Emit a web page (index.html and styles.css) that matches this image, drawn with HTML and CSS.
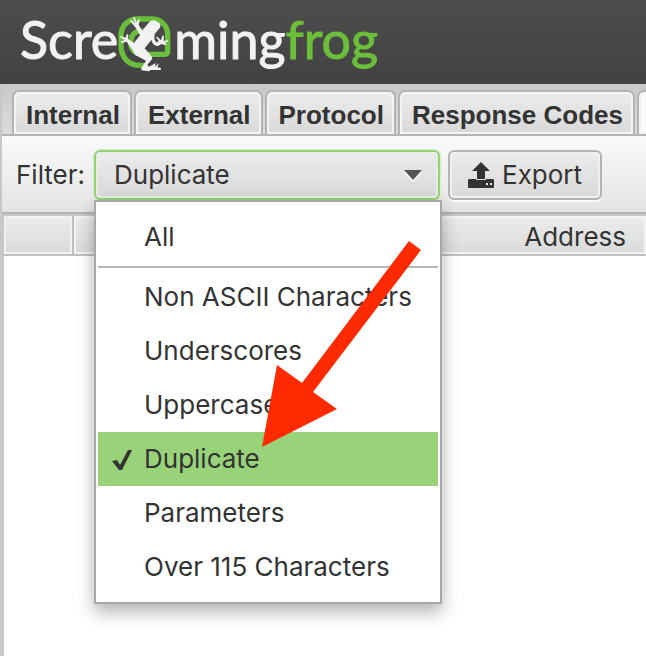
FILE: index.html
```html
<!DOCTYPE html>
<html lang="en">
<head>
<meta charset="utf-8">
<title>Screamingfrog</title>
<link rel="stylesheet" href="styles.css">
</head>
<body>
<header class="brand">
  <span class="word">Scre</span>
  <svg class="frog" viewBox="24 12 168 180" role="img" aria-label="a">
    <path class="at" d="M104 172H92C54 172 33 148 33 112V84C33 52 54 33 86 33H122C154 33 173 52 173 82V128Q173 139 162 139H106"/>
    <path class="at" d="M98 68C72 68 62 84 62 104C62 126 78 139 98 139"/>
    <path class="skin" d="M96 68L118 42Q126 34 138 39L150 47Q154 56 146 64L134 78L133 94L140 104L146 98L138 88L142 86L153 97L158 82L162 84L161 98L174 97L174 101L163 104L170 109L166 112L154 108L144 114Q134 116 128 106L124 96L104 121L122 142Q130 150 124 156L112 170L117 176L138 165L134 176L147 166L142 178L153 180L152 186L120 186L118 190L94 187Q92 180 98 174L108 158L76 141L62 118L50 101L34 105L32 101L44 96L30 88L32 84L46 89L51 78L55 80L54 93L72 105L90 82L78 61L60 38L64 35L75 46L70 28L74 27L80 43L86 33L90 35L86 50Z"/>
  </svg>
  <span class="word">ming<span class="word-accent">frog</span></span>
</header>
<main class="app">
  <nav class="tabs">
    <button class="tab" type="button">Internal</button>
    <button class="tab" type="button">External</button>
    <button class="tab" type="button">Protocol</button>
    <button class="tab" type="button">Response Codes</button>
    <button class="tab tab-active" type="button" aria-label="URL"></button>
  </nav>
  <div class="toolbar">
    <label class="filter-label" for="filter">Filter:</label>
    <div class="combo">
      <select class="combo-select" id="filter">
        <option>All</option>
        <option>Non ASCII Characters</option>
        <option>Underscores</option>
        <option>Uppercase</option>
        <option selected>Duplicate</option>
        <option>Parameters</option>
        <option>Over 115 Characters</option>
      </select>
      <svg class="combo-arrow" viewBox="0 0 18 12" aria-hidden="true"><path d="M0 2h18l-9 10z" fill="#fff"/><path d="M0 0h18l-9 10z" fill="#555"/></svg>
      <div class="menu">
        <button class="item" type="button">All</button>
        <hr class="rule">
        <button class="item" type="button">Non ASCII Characters</button>
        <button class="item" type="button">Underscores</button>
        <button class="item" type="button">Uppercase</button>
        <button class="item item-on" type="button"><svg class="check" viewBox="0 0 20 20" aria-hidden="true"><path d="M0 11l5-1 3 5L16 0h4L10 20H7z"/></svg>Duplicate</button>
        <button class="item" type="button">Parameters</button>
        <button class="item" type="button">Over 115 Characters</button>
        <svg class="pointer" viewBox="0 0 160 206" aria-hidden="true"><path d="M147 0l12 9L51 151l24 17L0 206 15 124l25 18z"/></svg>
      </div>
    </div>
    <button class="export" type="button"><svg class="export-icon" viewBox="0 0 26 26" aria-hidden="true"><path d="M13 0l9 9h-5v8H9V9H4z"/><path d="M1 17h7v1h10v-1h7l1 1v7q0 1-1 1H1q-1 0-1-1v-7z"/><path d="M18 21h2v2h-2zM22 21h2v2h-2z" fill="#eee"/></svg>Export</button>
  </div>
  <div class="results">
    <table class="grid">
      <thead><tr><th class="col-index"></th><th class="col-address">Address</th></tr></thead>
    </table>
  </div>
</main>
</body>
</html>
```
FILE: styles.css
```css
* { box-sizing: border-box; }
body {
  margin: 0;
  min-height: 100vh;
  display: flex;
  flex-direction: column;
  background: #fff;
  color: #333;
  font: 26px/32px Inter, sans-serif;
}
button, select { font: inherit; color: inherit; margin: 0; }
.brand {
  display: flex;
  align-items: flex-start;
  height: 84px;
  padding: 0 20px;
  background: linear-gradient(#4d4d4d, #424242);
}
.word { font: 52px/78px Lato, sans-serif; color: #f2f2f2; -webkit-text-stroke: 1px; }
.word-accent { color: #6bbf3a; }
.frog { width: 56px; height: 60px; margin-top: 12px; flex: none; }
.at { fill: none; stroke: #69be3b; stroke-width: 16; }
.skin { fill: #f2f2f2; }
.app {
  flex: 1;
  display: flex;
  flex-direction: column;
  border-left: 2px solid #c8c8c8;
}
.tabs {
  display: flex;
  gap: 2px;
  height: 52px;
  padding: 6px 0 0 10px;
  overflow: hidden;
  border-bottom: 2px solid #b4b4b4;
  background: linear-gradient(#c8c8c8, #dcdcdc);
}
.tab {
  flex: none;
  padding: 4px 10px 0 12px;
  border: 2px solid #b4b4b4;
  border-bottom: 0;
  border-radius: 7px 7px 0 0;
  background: linear-gradient(#ececec, #d8d8d8);
  box-shadow: inset 0 0 0 2px #f4f4f4;
  font: bold 26px/32px "Liberation Sans", sans-serif;
}
.tab-active { width: 120px; background: #fafafa; }
.toolbar {
  display: flex;
  align-items: flex-start;
  height: 78px;
  padding: 14px;
  border-bottom: 2px solid #b4b4b4;
  background: linear-gradient(#fafafa, #e4e4e4);
}
.filter-label { width: 78px; line-height: 50px; flex: none; }
.combo { position: relative; width: 346px; margin-right: 8px; flex: none; }
.combo-select {
  display: block;
  appearance: none;
  width: 100%;
  height: 50px;
  padding: 0 18px;
  border: 2px solid #93d275;
  border-radius: 6px;
  outline: 0;
  background: linear-gradient(#ececec, #d8d8d8);
  box-shadow: 0 0 0 1px #d5edca, inset 0 0 0 2px #e6eee2;
}
.combo-arrow { position: absolute; right: 18px; top: 20px; width: 18px; height: 12px; }
.menu {
  position: absolute;
  z-index: 1;
  top: 50px;
  left: 0;
  width: 348px;
  padding: 8px 2px;
  border: 2px solid #a8a8a8;
  background: #fff;
  box-shadow: 0 8px 16px rgba(0, 0, 0, .3);
}
.item {
  position: relative;
  display: block;
  width: 100%;
  height: 54px;
  padding: 0 0 0 46px;
  border: 0;
  background: none;
  text-align: left;
}
.item-on { background: #98d37a; }
.rule { height: 2px; margin: 2px 0; border: 0; background: #b8b8b8; }
.check { position: absolute; left: 14px; top: 18px; width: 20px; height: 20px; fill: #333; }
.pointer { position: absolute; left: 166px; top: 39px; width: 160px; height: 206px; fill: #ff2a00; }
.export {
  display: flex;
  align-items: center;
  gap: 8px;
  height: 50px;
  padding: 0 18px;
  border: 2px solid #b4b4b4;
  border-radius: 6px;
  background: linear-gradient(#ececec, #d8d8d8);
  box-shadow: 0 2px 0 #fafafa, inset 0 0 0 2px #f0f0f0;
}
.export-icon { width: 26px; height: 26px; fill: #333; }
.results {
  flex: 1;
  border-top: 2px solid #c8c8c8;
  border-left: 2px solid #c8c8c8;
}
.grid {
  width: 100%;
  border-collapse: separate;
  border-spacing: 0;
}
.grid th {
  height: 40px;
  padding: 4px 0 0;
  border-bottom: 2px solid #c0c0c0;
  background: linear-gradient(#ececec, #dadada);
  box-shadow: inset 0 0 0 2px #f2f2f2;
  font-weight: 400;
}
.grid .col-index { width: 70px; border-right: 2px solid #c0c0c0; }
.grid .col-address { padding-right: 20px; text-align: right; }
```
